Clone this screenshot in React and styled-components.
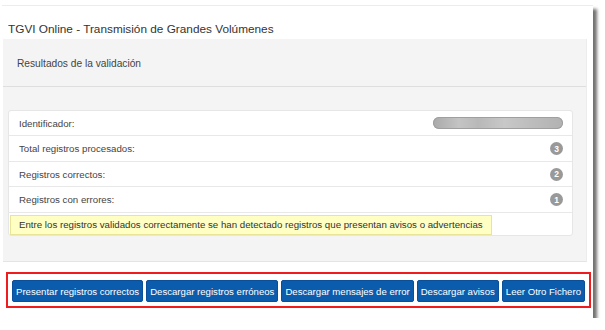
import React from "react";
import styled, { createGlobalStyle } from "styled-components";

const GlobalStyle = createGlobalStyle`
  body {
    margin: 0;
    background: #ffffff;
    font-family: "Liberation Sans", Arial, sans-serif;
    color: #333333;
  }
`;

const rows = [
  { label: "Total registros procesados:", count: 3, h: 26 },
  { label: "Registros correctos:", count: 2, h: 25 },
  { label: "Registros con errores:", count: 1, h: 26 },
];

const buttons = [
  "Presentar registros correctos",
  "Descargar registros erróneos",
  "Descargar mensajes de error",
  "Descargar avisos",
  "Leer Otro Fichero",
];

export default function App() {
  return (
    <>
      <GlobalStyle />
      <Page>
        <Card>
          <Title>TGVI Online - Transmisión de Grandes Volúmenes</Title>
          <Panel>
            <PanelHeading>Resultados de la validación</PanelHeading>
            <PanelBody>
              <List>
                <Row $h={25}>
                  <Label>Identificador:</Label>
                  <Redacted />
                </Row>
                {rows.map((r) => (
                  <Row key={r.label} $h={r.h}>
                    <Label>{r.label}</Label>
                    <Badge>{r.count}</Badge>
                  </Row>
                ))}
                <WarningRow>
                  <Warning>
                    Entre los registros validados correctamente se han detectado registros que presentan avisos o advertencias
                  </Warning>
                </WarningRow>
              </List>
            </PanelBody>
          </Panel>
          <Actions>
            {buttons.map((b) => (
              <Button key={b}>{b}</Button>
            ))}
          </Actions>
        </Card>
      </Page>
    </>
  );
}

const Page = styled.div`
  padding: 5px 0 0 2px;
`;

const Card = styled.div`
  width: 591px;
  height: 313px;
  box-sizing: border-box;
  background: #ffffff;
  border-top: 1px solid #ececf0;
  box-shadow: 4px 4px 3px rgba(0, 0, 0, 0.55);
  display: flex;
  flex-direction: column;
`;

const Title = styled.div`
  height: 33px;
  box-sizing: border-box;
  padding: 16px 0 0 6px;
  font-size: 11.8px;
  color: #333;
`;

const Panel = styled.div`
  margin-left: 1px;
  width: 584px;
  background: #f4f4f4;
  border-right: 1px solid #ececec;
  border-bottom: 1px solid #e4e4e4;
  box-sizing: border-box;
`;

const PanelHeading = styled.div`
  height: 48px;
  box-sizing: border-box;
  padding: 19px 0 0 14px;
  font-size: 10.2px;
  color: #444;
  border-bottom: 1px solid #dedede;
`;

const PanelBody = styled.div`
  padding: 23px 13px 25px 5px;
`;

const List = styled.div`
  background: #ffffff;
  border: 1px solid #e6e6e6;
  border-radius: 3px;
`;

const Row = styled.div`
  height: ${(p) => p.$h}px;
  box-sizing: border-box;
  display: flex;
  align-items: center;
  justify-content: space-between;
  padding: 0 9px 0 10px;
  border-bottom: 1px solid #e8e8e8;
`;

const Label = styled.span`
  font-size: 9.7px;
  color: #444;
`;

const Redacted = styled.span`
  width: 130px;
  height: 12px;
  border-radius: 6px;
  background: linear-gradient(90deg, #a9a9a9 0%, #c4c4c4 20%, #b8b8b8 35%, #c8c8c8 55%, #bdbdbd 75%, #b2b2b2 100%);
  box-shadow: inset 0 0 0 1px #9f9f9f;
`;

const Badge = styled.span`
  width: 13px;
  height: 13px;
  border-radius: 50%;
  background: #999999;
  color: #ffffff;
  font-size: 8.5px;
  font-weight: bold;
  display: flex;
  align-items: center;
  justify-content: center;
`;

const WarningRow = styled.div`
  height: 22px;
  padding: 1px 0 0 1px;
  box-sizing: border-box;
`;

const Warning = styled.div`
  display: inline-block;
  height: 20px;
  line-height: 18px;
  box-sizing: border-box;
  padding: 0 8px;
  background: #ffffc4;
  border: 1px solid #e8e49a;
  font-size: 9.7px;
  color: #333;
`;

const Actions = styled.div`
  margin: 10px 0 0 4px;
  width: 585px;
  height: 36px;
  box-sizing: border-box;
  border: 2px solid #ee1c1c;
  padding: 6px 4px 0 4px;
  display: flex;
  gap: 3px;
`;

const Button = styled.button`
  height: 22px;
  padding: 0 3px;
  border: 1px solid #0a4f98;
  border-radius: 2px;
  background: #0b5cad;
  color: #ffffff;
  font-family: "Liberation Sans", Arial, sans-serif;
  font-size: 9.6px;
  white-space: nowrap;
  cursor: pointer;
`;
